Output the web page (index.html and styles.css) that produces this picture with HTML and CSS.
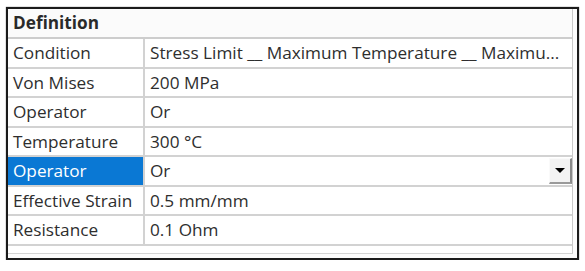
FILE: index.html
```html
<!DOCTYPE html>
<html>
<head>
<meta charset="utf-8">
<link rel="stylesheet" href="styles.css">
</head>
<body>
<div class="frame">
  <div class="panel">
    <div class="header">Definition</div>
    <div class="row"><div class="key">Condition</div><div class="val">Stress Limit __ Maximum Temperature __ Maximu...</div></div>
    <div class="row"><div class="key">Von Mises</div><div class="val">200 MPa</div></div>
    <div class="row"><div class="key">Operator</div><div class="val">Or</div></div>
    <div class="row"><div class="key">Temperature</div><div class="val">300 °C</div></div>
    <div class="row selected"><div class="key">Operator</div><div class="val">Or<span class="dd"><span class="tri"></span></span></div></div>
    <div class="row"><div class="key">Effective Strain</div><div class="val">0.5 mm/mm</div></div>
    <div class="row"><div class="key">Resistance</div><div class="val">0.1 Ohm</div></div>
  </div>
</div>
</body>
</html>
```
FILE: styles.css
```css
html, body { margin: 0; padding: 0; background: #fff; }
body {
  font-family: "Open Sans", "Noto Sans", sans-serif;
  font-size: 17.2px;
  color: #2e2e2e;
}
.frame {
  margin: 7px 0 0 6px;
  width: 573px;
  height: 253px;
  box-sizing: border-box;
  border: 2px solid #1b1b1b;
  box-shadow: 0 0 1px #555;
  padding: 0 4px 4px 0;
  background: #fcfcfc;
}
.panel {
  height: 100%;
  box-sizing: border-box;
  border-right: 1px solid #c9c9c9;
  border-bottom: 1px solid #d4d4d4;
  background: #fff;
}
.header {
  height: 28px;
  line-height: 28px;
  padding-left: 5px;
  font-weight: 700;
  color: #2a2a2a;
  border-bottom: 2px solid #cdcdcd;
  background: #fbfbfb;
}
.row {
  display: grid;
  grid-template-columns: 137px 1fr;
  height: 29.5px;
  box-sizing: border-box;
  border-bottom: 2px solid #d2d2d2;
}
.key {
  padding-left: 5px;
  line-height: 28px;
  border-right: 2px solid #d2d2d2;
  white-space: nowrap;
  overflow: hidden;
}
.val {
  padding-left: 5px;
  line-height: 28px;
  white-space: nowrap;
  position: relative;
}
.selected .key {
  background: #0a78d4;
  color: #fff;
}
.dd {
  position: absolute;
  right: 0;
  top: 1px;
  width: 23px;
  height: 26px;
  box-sizing: border-box;
  background: #f3f3f3;
  border-top: 1px solid #fafafa;
  border-left: 1px solid #fafafa;
  border-right: 2px solid #8a8a8a;
  border-bottom: 2px solid #9a9a9a;
  display: flex;
  align-items: center;
  justify-content: center;
}
.tri {
  width: 0;
  height: 0;
  border-left: 5px solid transparent;
  border-right: 5px solid transparent;
  border-top: 5px solid #000;
}
```
